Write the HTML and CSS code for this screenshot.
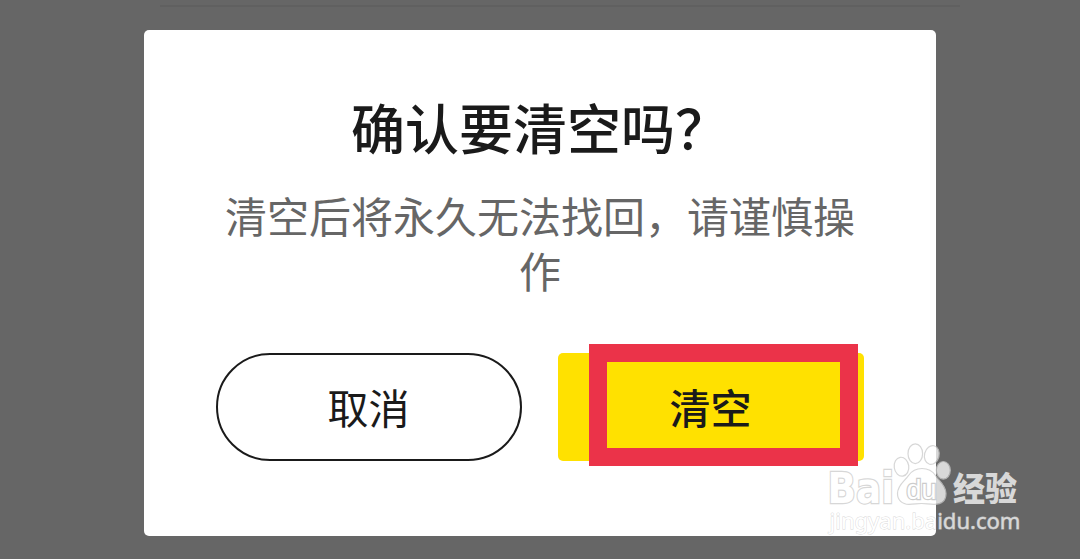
FILE: index.html
```html
<!DOCTYPE html>
<html lang="zh-CN">
<head>
<meta charset="utf-8">
<title>确认清空</title>
<link rel="stylesheet" href="styles.css">
</head>
<body>
<main class="overlay">
  <section class="dialog" role="dialog">
    <h1 class="title">确认要清空吗？</h1>
    <p class="message">清空后将永久无法找回，请谨慎操作</p>
    <div class="actions">
      <button class="btn cancel">取消</button>
      <button class="btn clear">清空<span class="highlight"></span></button>
    </div>
  </section>
  <svg class="watermark" width="220" height="120" viewBox="0 0 220 120">
    <g class="mark">
      <text class="brand" x="7.500" y="73" textLength="66.500" lengthAdjust="spacingAndGlyphs">Bai</text>
      <ellipse cx="81.5" cy="36.7" rx="7.3" ry="9.5" transform="rotate(-8 81.5 36.7)"/>
      <ellipse cx="95.3" cy="23.7" rx="7.3" ry="9.9"/>
      <ellipse cx="111.8" cy="25" rx="7.3" ry="9.5" transform="rotate(14 111.8 25)"/>
      <ellipse cx="123.3" cy="40.3" rx="7" ry="8.8"/>
      <path d="M102 38.500C109 38.500 112.500 41 115.500 45.500C118.500 50.500 126 55 126 63.500C126 71 121 74.300 114 74.300C109 74.300 106 73.500 101.500 73.500C97 73.500 94 74.300 89 74.300C82 74.300 77.500 70 77.500 63.500C77.500 55 85 51 88.500 45.500C92 40.500 95.500 38.500 102 38.500Z"/>
      <text class="du" x="86.500" y="68.500" textLength="30" lengthAdjust="spacingAndGlyphs">du</text>
      <text class="jingyan" x="133" y="70.500" textLength="64" lengthAdjust="spacingAndGlyphs">经验</text>
      <text class="site" x="9.500" y="99" textLength="191" lengthAdjust="spacingAndGlyphs">jingyan.baidu.com</text>
    </g>
  </svg>
</main>
</body>
</html>
```
FILE: styles.css
```css
* { box-sizing: border-box; }

body {
  margin: 0;
  font-family: "Noto Sans CJK SC", sans-serif;
}

.overlay {
  position: relative;
  height: 559px;
  padding-top: 30px;
  background: linear-gradient(#606060, #606060) 160px 5px / 800px 2px no-repeat #666;
  overflow: hidden;
}

.dialog {
  width: 792px;
  height: 506px;
  margin: 0 auto;
  padding: 61px 72px 0;
  border-radius: 5px;
  background: #fff;
}

.title {
  margin: 0;
  font-size: 54px;
  font-weight: 500;
  line-height: 72px;
  text-align: center;
  color: #1a1a1a;
}

.message {
  margin: 24px 0 0;
  font-size: 42px;
  line-height: 55px;
  text-align: center;
  color: #666;
}

.actions {
  display: flex;
  gap: 36px;
  margin-top: 56px;
}

.btn {
  width: 306px;
  height: 108px;
  padding: 0 1px 1px 0;
  font: 400 41px/1 "Noto Sans CJK SC", sans-serif;
  color: #1a1a1a;
}

.cancel {
  border: 2px solid #1a1a1a;
  border-radius: 54px;
  background: #fff;
}

.clear {
  position: relative;
  border: 0;
  border-radius: 5px;
  background: #ffe100;
  font-weight: 500;
}

.highlight {
  position: absolute;
  left: 31px;
  top: -9px;
  width: 269px;
  height: 122px;
  border: 18px solid #eb3349;
}

.watermark {
  position: absolute;
  left: 820px;
  top: 430px;
}

.mark {
  opacity: 0.75;
  fill: #fff;
  stroke: #cacaca;
  stroke-width: 1.2;
}

.mark text {
  paint-order: stroke;
}

.brand {
  font: 700 42px "DejaVu Sans", sans-serif;
  stroke-width: 2.4;
}

.du {
  font: 400 27px "Liberation Sans", sans-serif;
  stroke: #bcbcbc;
  stroke-width: 2.4;
}

.jingyan {
  font: 900 33px "Noto Sans CJK SC", sans-serif;
  stroke: none;
}

.site {
  font: 400 21px "Noto Sans", sans-serif;
  stroke-width: 0.8;
}
```
